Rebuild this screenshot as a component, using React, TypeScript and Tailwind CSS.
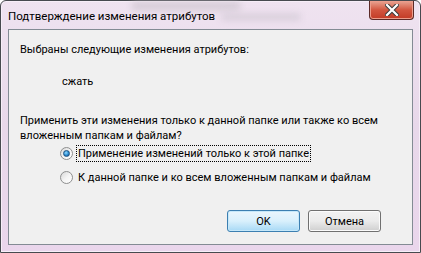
import React from "react";

function Radio({ checked }: { checked?: boolean }) {
  return (
    <span className="relative flex h-[13px] w-[13px] items-center justify-center rounded-full border border-[#8e8f8f] bg-gradient-to-br from-[#d8d8d8] via-[#f4f4f4] to-[#ffffff]">
      {checked && (
        <span className="h-[7px] w-[7px] rounded-full border border-[#1c5180] bg-[radial-gradient(circle_at_40%_35%,#8fd8ff,#2c8cd0_55%,#0d4b8f)]" />
      )}
    </span>
  );
}

function Button({ label, primary }: { label: string; primary?: boolean }) {
  return (
    <button
      className={
        "flex h-[22px] w-[73px] items-center justify-center rounded-[3px] border text-[11px] text-black " +
        (primary
          ? "border-[#3c7fb1] bg-gradient-to-b from-[#eaf6fd] via-[#d9f0fc] to-[#a7d9f5] shadow-[inset_0_0_0_1px_#c6e8fa]"
          : "border-[#707070] bg-gradient-to-b from-[#f2f2f2] via-[#ebebeb] to-[#cfcfcf] shadow-[inset_0_0_0_1px_#fbfbfb]")
      }
    >
      {label}
    </button>
  );
}

export default function App() {
  return (
    <div className="h-[253px] w-[421px] bg-white font-['Roboto',sans-serif]">
      <div className="flex h-full w-full flex-col rounded-t-[6px] border border-[#474a4f] bg-gradient-to-b from-[#efe3f0] via-[#e8d8ea] to-[#ead6ec] shadow-[inset_0_0_0_1px_#f7eef8]">
        {/* title bar */}
        <div className="relative flex h-[28px] items-start justify-between">
          <div className="pointer-events-none absolute left-[130px] top-0 h-[10px] w-[110px] rounded-full bg-[#c9c2cc]/60 blur-[3px]" />
          <div className="pointer-events-none absolute left-[220px] top-[12px] h-[8px] w-[80px] rounded-full bg-[#cfc6d2]/60 blur-[3px]" />
          <span className="relative pl-[7px] pt-[7px] text-[11.5px] leading-[16px] text-black">
            Подтверждение изменения атрибутов
          </span>
          <div className="relative mr-[6px] flex h-[19px] w-[45px] items-center justify-center rounded-b-[4px] border border-t-0 border-[#5b2a27] bg-gradient-to-b from-[#e8a493] via-[#d2553f] to-[#c23a25] shadow-[inset_0_0_0_1px_#ec9d8c]">
            <svg width="14" height="12" viewBox="0 0 14 12">
              <path d="M2 1 L12 11 M12 1 L2 11" stroke="#3b3b3b" strokeWidth="4.2" strokeLinecap="square" />
              <path d="M2 1 L12 11 M12 1 L2 11" stroke="#ffffff" strokeWidth="2.2" strokeLinecap="square" />
            </svg>
          </div>
        </div>
        {/* content */}
        <div className="mx-[7px] mb-[7px] flex flex-1 flex-col border border-[#838b94] bg-[#f0f0f0] text-[11px] leading-[15px] text-black">
          <div className="pl-[11px] pt-[12px]">Выбраны следующие изменения атрибутов:</div>
          <div className="pl-[53px] pt-[17px]">сжать</div>
          <div className="pl-[11px] pr-[12px] pt-[24px]">
            Применить эти изменения только к данной папке или также ко всем
            <br />
            вложенным папкам и файлам?
          </div>
          <div className="flex flex-col gap-[7px] pl-[51px] pt-[2px]">
            <div className="flex items-center gap-[3px]">
              <Radio checked />
              <span className="border border-dotted border-black px-px">
                Применение изменений только к этой папке
              </span>
            </div>
            <div className="flex items-center gap-[3px]">
              <Radio />
              <span className="border border-transparent px-px">
                К данной папке и ко всем вложенным папкам и файлам
              </span>
            </div>
          </div>
          <div className="mt-auto flex justify-end gap-[8px] pb-[12px] pr-[31px]">
            <Button label="OK" primary />
            <Button label="Отмена" />
          </div>
        </div>
      </div>
    </div>
  );
}
